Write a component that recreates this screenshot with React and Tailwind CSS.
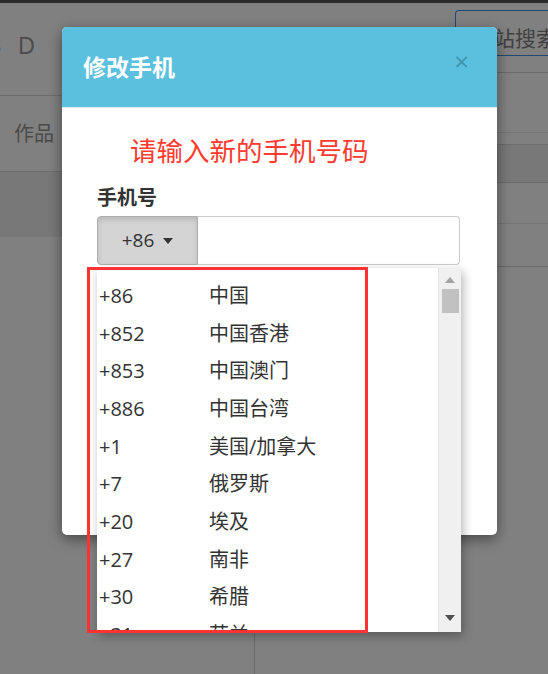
import React from 'react'

// 国际区号列表
const AREA_CODES = [
    ['+86', '中国'],
    ['+852', '中国香港'],
    ['+853', '中国澳门'],
    ['+886', '中国台湾'],
    ['+1', '美国/加拿大'],
    ['+7', '俄罗斯'],
    ['+20', '埃及'],
    ['+27', '南非'],
    ['+30', '希腊'],
    ['+31', '荷兰'],
]

const FONT = 'font-["Open_Sans","Noto_Sans_CJK_SC",sans-serif]'

function PageBehind() {
    return (
        <div className="flex h-full w-full flex-col">
            <div className="h-[3px] bg-[#2b2b2b]" />
            <div className="flex flex-1">
                {/* 左侧栏 */}
                <div className="flex w-[255px] flex-col">
                    <div className="flex h-[93px] items-start border-b border-[#6c6c6c] pt-[24px]">
                        <span className="-ml-[14px] whitespace-nowrap text-[24px] tracking-[5px] text-[#4a4a4a]">B D</span>
                    </div>
                    <div className="flex h-[76px] items-center border-b border-[#6c6c6c] pl-[14px] text-[20px] text-[#4a4a4a]">
                        作品
                    </div>
                    <div className="h-[65px] bg-[#787878]" />
                    <div className="h-[300px]" />
                    <div className="flex-1 border-r border-[#6a6a6a]" />
                </div>
                {/* 右侧栏 */}
                <div className="flex flex-1 flex-col">
                    <div className="flex h-[53px] items-end justify-end">
                        <div className="flex h-[46px] w-[93px] items-center overflow-hidden whitespace-nowrap rounded-l-[4px] border border-r-0 border-[#1c4a77] pl-[17px] pt-[12px] text-[21px] text-[#404040]">
                            全站搜索
                        </div>
                    </div>
                    <div className="h-[17px] border-b border-[#6c6c6c]" />
                    <div className="h-[60px] border-b border-[#747474]" />
                    <div className="h-[12px] border-b border-[#6c6c6c]" />
                    <div className="h-[38px] border-b border-[#6c6c6c] bg-[#787878]" />
                    <div className="h-[41px] border-b border-[#747474]" />
                    <div className="h-[43px] border-b border-[#6c6c6c]" />
                </div>
            </div>
        </div>
    )
}

function Caret({ className }) {
    return (
        <svg width="10" height="6" viewBox="0 0 10 6" className={className}>
            <path d="M0 0 L10 0 L5 6 Z" fill="currentColor" />
        </svg>
    )
}

function CodeDropdown() {
    return (
        <div className="absolute left-[97px] top-[268px] flex h-[364px] w-[364px] bg-white shadow-[2px_4px_10px_rgba(0,0,0,0.3)]">
            <ul className="flex-1 overflow-hidden pt-[9px] text-[20px] text-[#333]">
                {AREA_CODES.map(([code, name]) => (
                    <li key={code} className="flex h-[37.7px] items-center pl-[2px]">
                        <span className="w-[110px]">{code}</span>
                        <span>{name}</span>
                    </li>
                ))}
            </ul>
            {/* 滚动条 */}
            <div className="flex w-[23px] flex-col items-center border-l border-[#e4e4e4] bg-[#f0f0f0]">
                <Caret className="mt-[9px] rotate-180 text-[#a3a3a3]" />
                <div className="mt-[6px] h-[24px] w-[17px] bg-[#c1c1c1]" />
                <div className="flex-1" />
                <Caret className="mb-[11px] text-[#505050]" />
            </div>
        </div>
    )
}

export default function App() {
    return (
        <div className={`relative h-[674px] w-[548px] overflow-hidden bg-[#808080] ${FONT}`}>
            <PageBehind />

            {/* 修改手机弹窗 */}
            <div className="absolute left-[62px] top-[27px] flex h-[508px] w-[435px] flex-col overflow-hidden rounded-[5px] bg-white shadow-[0_4px_14px_rgba(0,0,0,0.45)]">
                <div className="flex h-[81px] shrink-0 items-center justify-between border-b border-[#d9eef5] bg-[#5bc0de] pl-[21px] pr-[28px]">
                    <h4 className="text-[23px] font-bold text-white">修改手机</h4>
                    <span className="-mt-[12px] text-[26px] leading-none text-[#3f93ae]">×</span>
                </div>
                <div className="flex flex-col px-[35px]">
                    <p className="mt-[26px] pl-[33px] text-[26.5px] leading-[34px] text-[#ff3b2f]">请输入新的手机号码</p>
                    <label className="mt-[16px] text-[20px] font-bold leading-[28px] text-[#333]">手机号</label>
                    <div className="mt-[4px] flex h-[49px] w-[363px]">
                        <button className="flex w-[101px] items-center justify-center gap-[9px] rounded-l-[4px] border border-[#adadad] bg-[#d4d4d4] text-[19px] text-[#333] shadow-[inset_0_3px_5px_rgba(0,0,0,0.12)]">
                            +86
                            <Caret className="text-[#333]" />
                        </button>
                        <input className="flex-1 rounded-r-[4px] border border-l-0 border-[#ccc] outline-none" />
                    </div>
                </div>
            </div>

            <CodeDropdown />

            {/* 红色标注框 */}
            <div className="absolute left-[87px] top-[267px] h-[366px] w-[281px] border-[3px] border-[#ff3333]" />
        </div>
    )
}
